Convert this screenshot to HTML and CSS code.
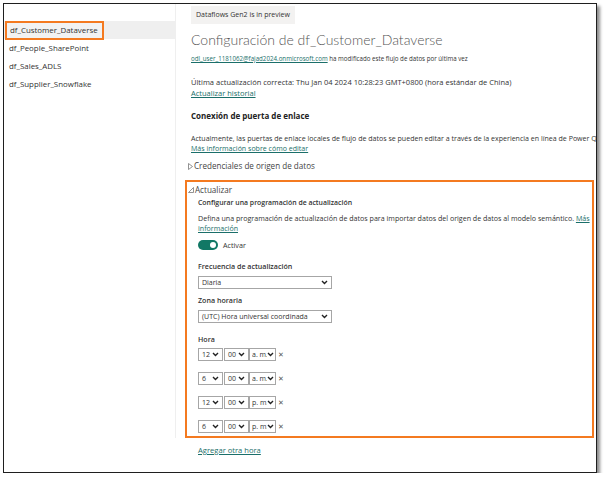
FILE: index.html
```html
<!DOCTYPE html>
<html lang="es">
<head>
<meta charset="utf-8">
<title>Configuración de df_Customer_Dataverse</title>
<link rel="stylesheet" href="styles.css">
</head>
<body>
<div class="frame">
  <aside class="sidebar">
    <div class="item selected"><span class="hl">df_Customer_Dataverse</span></div>
    <div class="item">df_People_SharePoint</div>
    <div class="item">df_Sales_ADLS</div>
    <div class="item">df_Supplier_Snowflake</div>
  </aside>
  <main class="main">
    <div class="badge">Dataflows Gen2 is in preview</div>
    <h1 class="title">Configuración de df_Customer_Dataverse</h1>
    <p class="modified"><a class="link">odl_user_1181062@fajad2024.onmicrosoft.com</a> ha modificado este flujo de datos por última vez</p>
    <p class="small last">Última actualización correcta: Thu Jan 04 2024 10:28:23 GMT+0800 (hora estándar de China)<br><a class="link">Actualizar historial</a></p>
    <h2 class="section">Conexión de puerta de enlace</h2>
    <p class="small gateway">Actualmente, las puertas de enlace locales de flujo de datos se pueden editar a través de la experiencia en línea de Power Query<br><a class="link">Más información sobre cómo editar</a></p>
    <div class="expander creds"><svg class="tri" width="5" height="7" viewBox="0 0 5 7"><path d="M0.5 0.5 L4.5 3.5 L0.5 6.5 Z" fill="none" stroke="#777" stroke-width="0.8"/></svg>Credenciales de origen de datos</div>
    <section class="refresh">
      <div class="expander open"><svg class="tri" width="6" height="6" viewBox="0 0 6 6"><path d="M5.5 0.5 L5.5 5.5 L0.5 5.5 Z" fill="none" stroke="#777" stroke-width="0.8"/></svg>Actualizar</div>
      <div class="inner">
        <h3 class="sub">Configurar una programación de actualización</h3>
        <p class="small desc">Defina una programación de actualización de datos para importar datos del origen de datos al modelo semántico. <a class="link">Más información</a></p>
        <div class="toggle-row"><span class="toggle"><span class="knob"></span></span><span class="toggle-text">Activar</span></div>
        <label class="lbl first">Frecuencia de actualización</label>
        <div class="select wide"><span>Diaria</span><svg class="chev" width="7" height="5" viewBox="0 0 7 5"><path d="M1 1 L3.5 3.5 L6 1" fill="none" stroke="#222" stroke-width="1.4"/></svg></div>
        <label class="lbl">Zona horaria</label>
        <div class="select wide"><span>(UTC) Hora universal coordinada</span><svg class="chev" width="7" height="5" viewBox="0 0 7 5"><path d="M1 1 L3.5 3.5 L6 1" fill="none" stroke="#222" stroke-width="1.4"/></svg></div>
        <label class="lbl hora">Hora</label>
        <div class="times">
          <div class="time-row">
            <div class="select h"><span>12</span><svg class="chev" width="7" height="5" viewBox="0 0 7 5"><path d="M1 1 L3.5 3.5 L6 1" fill="none" stroke="#222" stroke-width="1.4"/></svg></div>
            <div class="select m"><span>00</span><svg class="chev" width="7" height="5" viewBox="0 0 7 5"><path d="M1 1 L3.5 3.5 L6 1" fill="none" stroke="#222" stroke-width="1.4"/></svg></div>
            <div class="select ap"><span>a. m.</span><svg class="chev" width="7" height="5" viewBox="0 0 7 5"><path d="M1 1 L3.5 3.5 L6 1" fill="none" stroke="#222" stroke-width="1.4"/></svg></div>
            <span class="x">✕</span>
          </div>
          <div class="time-row">
            <div class="select h"><span>6</span><svg class="chev" width="7" height="5" viewBox="0 0 7 5"><path d="M1 1 L3.5 3.5 L6 1" fill="none" stroke="#222" stroke-width="1.4"/></svg></div>
            <div class="select m"><span>00</span><svg class="chev" width="7" height="5" viewBox="0 0 7 5"><path d="M1 1 L3.5 3.5 L6 1" fill="none" stroke="#222" stroke-width="1.4"/></svg></div>
            <div class="select ap"><span>a. m.</span><svg class="chev" width="7" height="5" viewBox="0 0 7 5"><path d="M1 1 L3.5 3.5 L6 1" fill="none" stroke="#222" stroke-width="1.4"/></svg></div>
            <span class="x">✕</span>
          </div>
          <div class="time-row">
            <div class="select h"><span>12</span><svg class="chev" width="7" height="5" viewBox="0 0 7 5"><path d="M1 1 L3.5 3.5 L6 1" fill="none" stroke="#222" stroke-width="1.4"/></svg></div>
            <div class="select m"><span>00</span><svg class="chev" width="7" height="5" viewBox="0 0 7 5"><path d="M1 1 L3.5 3.5 L6 1" fill="none" stroke="#222" stroke-width="1.4"/></svg></div>
            <div class="select ap"><span>p. m.</span><svg class="chev" width="7" height="5" viewBox="0 0 7 5"><path d="M1 1 L3.5 3.5 L6 1" fill="none" stroke="#222" stroke-width="1.4"/></svg></div>
            <span class="x">✕</span>
          </div>
          <div class="time-row">
            <div class="select h"><span>6</span><svg class="chev" width="7" height="5" viewBox="0 0 7 5"><path d="M1 1 L3.5 3.5 L6 1" fill="none" stroke="#222" stroke-width="1.4"/></svg></div>
            <div class="select m"><span>00</span><svg class="chev" width="7" height="5" viewBox="0 0 7 5"><path d="M1 1 L3.5 3.5 L6 1" fill="none" stroke="#222" stroke-width="1.4"/></svg></div>
            <div class="select ap"><span>p. m.</span><svg class="chev" width="7" height="5" viewBox="0 0 7 5"><path d="M1 1 L3.5 3.5 L6 1" fill="none" stroke="#222" stroke-width="1.4"/></svg></div>
            <span class="x">✕</span>
          </div>
        </div>
      </div>
    </section>
    <a class="link add">Agregar otra hora</a>
  </main>
</div>
</body>
</html>
```

FILE: styles.css
```css
* { box-sizing: border-box; }
html, body { margin: 0; padding: 0; background: #fff; }
body {
  font-family: "Open Sans", "Noto Sans", sans-serif;
  color: #323130;
}
.frame {
  margin: 3px 0 0 3px;
  width: 594px;
  height: 470px;
  border: 1.5px solid #1f1f1f;
  box-shadow: 3px 3px 3px rgba(0,0,0,0.45);
  display: flex;
  overflow: hidden;
  background: #fff;
}
.sidebar {
  width: 172px;
  flex: none;
  height: 434px;
  border-right: 1.5px solid #efefef;
  padding-top: 17px;
}
.item {
  height: 18px;
  display: flex;
  align-items: center;
  padding-left: 5px;
  font-size: 7.9px;
  color: #333;
}
.item.selected { background: #efefef; }
.hl {
  margin-left: -4px;
  padding: 1px 4px 2px 3px;
  border: 2.5px solid #f47a20;
  background: #f2f2f2;
  line-height: 12px;
}
.main {
  flex: 1;
  min-width: 0;
  padding: 1.5px 0 0 15px;
  overflow: hidden;
}
.badge {
  width: fit-content;
  background: #f3f2f1;
  height: 18px;
  line-height: 18px;
  padding: 0 5px;
  font-size: 7px;
  color: #333;
}
.title {
  margin: 7px 0 0;
  font-family: "Lato", "Open Sans", sans-serif;
  font-size: 14px;
  font-weight: 300;
  color: #555;
  line-height: 18px;
  white-space: nowrap;
}
p { margin: 0; }
.link { color: #1b6f6a; text-decoration: underline; }
.modified {
  margin-top: 5px;
  font-size: 6.2px;
  line-height: 10px;
  color: #333;
  white-space: nowrap;
}
.small { font-size: 7.5px; line-height: 11px; color: #333; }
.last { margin-top: 13px; }
.section {
  margin: 11.5px 0 0;
  font-size: 8px;
  font-weight: 700;
  color: #222;
  line-height: 12px;
}
.gateway { white-space: nowrap; margin-top: 10.75px; line-height: 10.5px; font-size: 7.05px; }
.expander {
  font-size: 8.1px;
  color: #444;
  display: flex;
  align-items: center;
  line-height: 12px;
  height: 12px;
}
.creds { margin: 6.5px 0 0 -3px; }
.tri { margin-right: 1px; }
.refresh {
  margin: 7.5px 0 0 -6px;
  width: 409px;
  border: 2.5px solid #f47a20;
  padding: 2px 0 3px 0;
}
.refresh .expander.open { margin-left: 1px; }
.inner { padding-left: 11px; }
.sub {
  margin: 1.5px 0 0;
  font-size: 6.9px;
  font-weight: 600;
  color: #333;
  line-height: 12px;
}
.desc { margin-top: 4px; line-height: 10px; font-size: 7.1px; }
.toggle-row { display: flex; align-items: center; margin-top: 6px; height: 12px; }
.toggle {
  width: 20px; height: 10px; border-radius: 5px; background: #117865;
  position: relative; margin-right: 5px;
}
.knob {
  position: absolute; right: 2px; top: 2px; width: 6px; height: 6px;
  border-radius: 50%; background: #fff;
}
.toggle-text { font-size: 7.2px; color: #333; }
.lbl {
  display: block;
  margin-top: 6.5px;
  font-size: 7.1px;
  font-weight: 600;
  color: #333;
  line-height: 11px;
}
.lbl.first { margin-top: 10px; }
.select {
  display: flex;
  align-items: center;
  justify-content: space-between;
  height: 13px;
  border: 1px solid #a6a6a6;
  padding: 0 3px 0 3px;
  font-size: 7px;
  color: #333;
  margin-top: 3.5px;
  overflow: hidden;
  white-space: nowrap;
}
.select.wide { width: 134px; }
.lbl.hora { margin-top: 11.5px; }
.times { display: flex; flex-direction: column; gap: 11px; margin-top: 3px; }
.time-row { display: flex; align-items: center; }
.time-row .select { margin-top: 0; }
.select.h { width: 25px; }
.select.m { width: 25px; margin-left: 1px; }
.select.ap { width: 27px; padding-left: 2px; padding-right: 1px; }
.select.ap span { overflow: hidden; width: 15px; }
.chev { flex: none; }
.x { font-size: 7px; color: #555; margin-left: 2px; }
.add {
  display: block;
  width: fit-content;
  margin: 6.5px 0 0 7px;
  font-size: 7.6px;
  line-height: 11px;
}
```
